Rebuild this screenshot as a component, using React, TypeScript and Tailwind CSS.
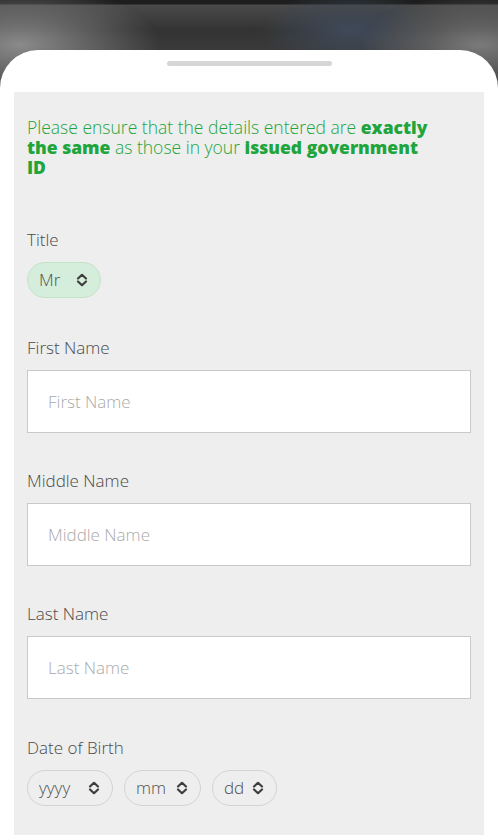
import React from "react";

function Chevrons() {
  return (
    <svg width="12" height="14" viewBox="0 0 12 14" fill="none" className="shrink-0">
      <path d="M2 5.5 L6 1.8 L10 5.5" stroke="#3d3d3d" strokeWidth="2.2" strokeLinecap="round" strokeLinejoin="round" />
      <path d="M2 8.5 L6 12.2 L10 8.5" stroke="#3d3d3d" strokeWidth="2.2" strokeLinecap="round" strokeLinejoin="round" />
    </svg>
  );
}

function Select({ label, green, width }: { label: string; green?: boolean; width: string }) {
  return (
    <div
      className={`flex h-[36px] items-center justify-between rounded-full border pl-[11px] pr-[12px] ${width} ${
        green ? "border-[#c2e3ca] bg-[#d5eddb]" : "border-[#d3d3d3] bg-[#eeeeee]"
      }`}
    >
      <span className="text-[17px] font-light text-[#505050]">{label}</span>
      <Chevrons />
    </div>
  );
}

function TextField({ label }: { label: string }) {
  return (
    <div className="mt-[36px] first:mt-0">
      <div className="text-[17px] leading-[24px] font-light text-[#4a4a4a]">{label}</div>
      <div className="mt-[10px] flex h-[63px] items-center border border-[#c9c9c9] bg-white pl-[20px]">
        <span className="text-[17px] font-light text-[#aaaaaa]">{label}</span>
      </div>
    </div>
  );
}

export default function App() {
  return (
    <div
      className="h-[840px] w-[498px] overflow-hidden bg-[#2d2d2d] font-['Open_Sans','Lato',sans-serif]"
      style={{
        backgroundImage:
          "radial-gradient(ellipse 140px 60px at 20px 45px, #8a8a8a 0%, rgba(120,120,120,0) 100%), radial-gradient(ellipse 120px 50px at 480px 45px, #7a7a7a 0%, rgba(120,120,120,0) 100%), radial-gradient(ellipse 90px 40px at 350px 30px, #3f4a5a 0%, rgba(60,70,90,0) 100%), linear-gradient(#1e1e1e 0px, #1e1e1e 4px, #4a4a4a 5px, #333333 30px, #3a3a3a 50px)",
      }}
    >
      <div className="mt-[50px] h-[790px] rounded-t-[38px] bg-white pt-[11px]">
        {/* Drag handle */}
        <div className="mx-auto h-[5px] w-[165px] rounded-full bg-[#d6d6d6]" />

        {/* Form panel */}
        <div className="mx-[14px] mt-[26px] h-[743px] bg-[#eeeeee] px-[13px] pt-[25px]">
          <p className="text-[17.5px] leading-[20px] font-light text-[#20a53c]">
            Please ensure that the details entered are <b className="font-extrabold">exactly</b>
            <br />
            <b className="font-extrabold">the same</b> as those in your <b className="font-extrabold">issued government</b>
            <br />
            <b className="font-extrabold">ID</b>
          </p>

          <div className="mt-[51px] text-[17px] leading-[24px] font-light text-[#4a4a4a]">Title</div>
          <div className="mt-[10px] flex">
            <Select label="Mr" green width="w-[74px]" />
          </div>

          <div className="mt-[38px]">
            <TextField label="First Name" />
            <TextField label="Middle Name" />
            <TextField label="Last Name" />
          </div>

          <div className="mt-[37px] text-[17px] leading-[24px] font-light text-[#4a4a4a]">Date of Birth</div>
          <div className="mt-[10px] flex gap-[11px]">
            <Select label="yyyy" width="w-[86px]" />
            <Select label="mm" width="w-[77px]" />
            <Select label="dd" width="w-[65px]" />
          </div>
        </div>
      </div>
    </div>
  );
}
